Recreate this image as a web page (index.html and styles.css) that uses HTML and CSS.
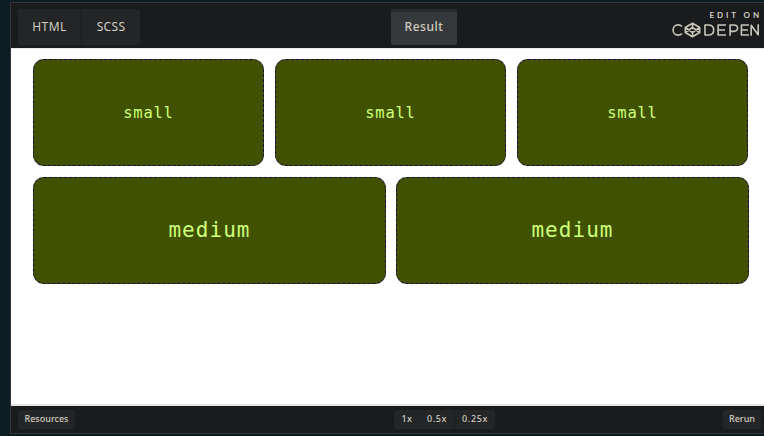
FILE: index.html
```html
<!DOCTYPE html>
<html lang="en">
<head>
<meta charset="utf-8">
<title>Pen embed</title>
<link rel="stylesheet" href="styles.css">
</head>
<body>
<div class="embed">
  <header class="header">
    <nav class="tabs"><span class="tab html">HTML</span><span class="tab scss">SCSS</span></nav>
    <span class="result">Result</span>
    <div class="brand">
      <span class="edit">EDIT ON</span>
      <svg class="logo" width="88" height="16" viewBox="0 0 88 16" role="img" aria-label="CodePen" fill="none" stroke="#c9c5ba" stroke-width="1.6" stroke-linejoin="round">
        <path d="M10 4.5C8.6 3.1 7.2 2.9 6 2.9C3.2 2.9 1.1 5.2 1.1 8S3.2 13.1 6 13.1C7.6 13.1 8.9 12.7 10 11.5"/>
        <path d="M20.5 1.2L27.7 5.5V10.5L20.5 14.8L13.3 10.5V5.5ZM20.5 1.2V5.5M20.5 10.5V14.8M13.3 5.5L20.5 10.5L27.7 5.5M13.3 10.5L20.5 5.5L27.7 10.5"/>
        <path d="M33 3H36.2C39.8 3 41.7 5.1 41.7 8S39.8 13 36.2 13H33ZM54 3H46.1V13H54M46.1 8H53M58.1 13.7V3H61.7C64.2 3 65.6 4.2 65.6 6.1S64.2 9.4 61.7 9.4H58.1M77 3H69.4V13H77M69.4 8H76M79.2 13.7V3.2L86.2 12.8V2.3"/>
      </svg>
    </div>
  </header>
  <main class="preview">
    <div class="row thirds"><div class="box">small</div><div class="box">small</div><div class="box">small</div></div>
    <div class="row halves"><div class="box">medium</div><div class="box">medium</div></div>
  </main>
  <footer class="footer">
    <span class="button resources">Resources</span>
    <div class="zooms"><span class="zoom one">1x</span><span class="zoom half">0.5x</span><span class="zoom quarter">0.25x</span></div>
    <span class="button rerun">Rerun</span>
  </footer>
</div>
</body>
</html>
```
FILE: styles.css
```css
* { box-sizing: border-box; }
body {
  margin: 0;
  height: 436px;
  padding: 2px 0 2px 10px;
  overflow: hidden;
  background: #0c1d24;
  font-family: "Noto Sans", "Open Sans", sans-serif;
  color: #d2cdc0;
}
.embed {
  height: 432px;
  display: flex;
  flex-direction: column;
  border: 1px solid #343638;
  border-right: 0;
}
.header {
  height: 45px;
  display: grid;
  grid-template-columns: 373px 66px 1fr;
  padding: 6px 4px 0 7px;
  background: #1a1b1d;
}
.tabs { display: flex; gap: 1px; }
.tab, .result {
  height: 36px;
  line-height: 35px;
  text-align: center;
  font-size: 12px;
  background: #232527;
}
.html { width: 63px; border-radius: 3px 0 0 3px; letter-spacing: .5px; }
.scss { width: 58px; border-radius: 0 3px 3px 0; letter-spacing: .3px; }
.result {
  border-top: 3px solid #2a2c2e;
  line-height: 30px;
  background: #36393c;
  border-radius: 2px;
  letter-spacing: .55px;
  font-weight: 500;
}
.brand { display: flex; flex-direction: column; align-items: flex-end; }
.edit {
  height: 12px;
  margin-right: -2px;
  font: bold 8px/12px Lato, sans-serif;
  letter-spacing: 2.9px;
}
.logo { margin: 1px 0 0; }
.preview {
  height: 358px;
  padding: 10px 15px 0 22px;
  background: #fff;
  border-top: 1px solid #e8e8ea;
  border-bottom: 2px solid #e5e5e5;
  font-family: "DejaVu Sans Mono", monospace;
}
.row { display: grid; height: 107px; }
.thirds { grid-template-columns: repeat(3, 231px); column-gap: 11px; font-size: 15.5px; letter-spacing: .75px; }
.halves { grid-template-columns: repeat(2, 353px); column-gap: 10px; margin-top: 11px; font-size: 21px; letter-spacing: 1.05px; }
.box {
  display: flex;
  align-items: center;
  justify-content: center;
  border: 1px dashed #1a064d;
  border-radius: 11px;
  background: #405200;
  color: #ceff78;
}
.halves .box { padding-bottom: 2px; }
.footer {
  height: 27px;
  display: grid;
  grid-template-columns: 376px 101px 1fr;
  align-items: start;
  padding: 4px 3px 0 7px;
  background: #1a1b1d;
  font-size: 9px;
  font-weight: 500;
}
.button, .zoom {
  height: 19px;
  line-height: 18px;
  text-align: center;
  background: #232527;
  border-radius: 3px;
}
.resources { width: 57px; }
.rerun { width: 38px; justify-self: end; }
.zooms { display: flex; }
.zoom { border-radius: 0; letter-spacing: .6px; }
.one { width: 26px; border-radius: 3px 0 0 3px; }
.half { width: 34px; }
.quarter { width: 40px; margin-left: 1px; border-radius: 0 3px 3px 0; }
```
